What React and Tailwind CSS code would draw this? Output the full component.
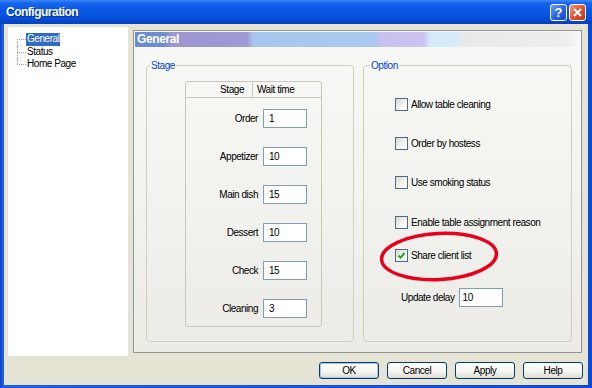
import React from "react";

const stages = [
  ["Order", "1"],
  ["Appetizer", "10"],
  ["Main dish", "15"],
  ["Dessert", "10"],
  ["Check", "15"],
  ["Cleaning", "3"],
];

const options = [
  { label: "Allow table cleaning", mt: "mt-[26px]" },
  { label: "Order by hostess", mt: "mt-[26px]" },
  { label: "Use smoking status", mt: "mt-[26px]" },
  { label: "Enable table assignment reason", mt: "mt-[27px]" },
  { label: "Share client list", mt: "mt-[20px]", checked: true },
];

function CheckBox({ checked }) {
  return (
    <span className="w-[13px] h-[13px] shrink-0 border border-[#4f6b8c] bg-[linear-gradient(135deg,#d8d8d2,#f6f6f3_60%,#ffffff)] flex items-center justify-center">
      {checked && (
        <svg width="9" height="9" viewBox="0 0 9 9">
          <path d="M1.5 4.5 L3.6 6.6 L7.6 2" fill="none" stroke="#21a121" strokeWidth="2" />
        </svg>
      )}
    </span>
  );
}

function XpButton({ children, primary }) {
  return (
    <button
      className={
        primary
          ? "w-[60px] h-[17px] rounded-[3px] border border-[#003c74] bg-[linear-gradient(to_bottom,#ffffff,#f3f3ee_60%,#dcdcd3)] shadow-[inset_0_0_0_1px_#a9c4f0] leading-[15px] text-black"
          : "w-[60px] h-[17px] rounded-[3px] border border-[#003c74] bg-[linear-gradient(to_bottom,#ffffff,#f3f3ee_60%,#dcdcd3)] leading-[15px] text-black"
      }
    >
      {children}
    </button>
  );
}

function TreeItem({ label, first, last, selected }) {
  return (
    <div className="flex h-[12.5px] items-stretch">
      <div className="w-[9px] flex flex-col">
        <div className={first ? "h-1/2" : "h-1/2 border-l border-dotted border-[#a0a0a0]"} />
        <div
          className={
            last
              ? "h-1/2 border-t border-dotted border-[#a0a0a0]"
              : "h-1/2 border-t border-l border-dotted border-[#a0a0a0]"
          }
        />
      </div>
      <span
        className={
          selected
            ? "px-[1px] bg-[#316ac5] text-white leading-[12.5px]"
            : "px-[1px] text-black leading-[12.5px]"
        }
      >
        {label}
      </span>
    </div>
  );
}

export default function App() {
  return (
    <div className="relative w-[592px] h-[388px] flex flex-col overflow-hidden bg-[linear-gradient(to_right,#0a3fc4,#1d5ee6_3px,#0b4ad6)] [font-family:'Liberation_Sans',Arial,sans-serif] text-[10px] tracking-[-0.45px] text-black">
      {/* Title bar */}
      <div className="h-[24px] flex items-center pl-[6px] pr-[6px] bg-[linear-gradient(to_bottom,#3d8af7_0%,#1866ee_12%,#0a58e6_40%,#0552dd_70%,#0447c8_92%,#0a3fb5_100%)]">
        <span className="text-white font-bold text-[12px] tracking-[-0.5px] leading-[16px] [text-shadow:1px_1px_0_#0a2a8a]">
          Configuration
        </span>
        <div className="ml-auto flex gap-[2px]">
          <div className="w-[17px] h-[17px] rounded-[3px] border border-white bg-[linear-gradient(135deg,#6aa0ff,#2b63e8_50%,#1a47c8)] flex items-center justify-center text-white font-bold text-[13px] tracking-normal leading-none">
            ?
          </div>
          <div className="w-[17px] h-[17px] rounded-[3px] border border-white bg-[linear-gradient(135deg,#f29a7a,#e0532f_50%,#c0381a)] flex items-center justify-center">
            <svg width="11" height="11" viewBox="0 0 11 11">
              <path d="M2 2 L9 9 M9 2 L2 9" stroke="white" strokeWidth="2" />
            </svg>
          </div>
        </div>
      </div>

      {/* Body */}
      <div className="flex-1 mx-[4px] mb-[3px] bg-[#e5e3d4] flex flex-col">
        <div className="flex items-start pt-[3px] pl-[4px]">
          {/* Tree */}
          <div className="w-[120px] h-[329px] bg-white pt-[6px] pl-[9px]">
            <TreeItem label="General" first selected />
            <TreeItem label="Status" />
            <TreeItem label="Home Page" last />
          </div>

          {/* Page panel */}
          <div className="ml-[5px] mt-[3px] w-[449px] h-[323px] border border-[#8e979b] p-[1px] bg-[linear-gradient(to_bottom,#f8f8f6,#f1f1ed_60%,#ecebe6)] flex flex-col">
            <div className="h-[15px] pl-[2px] flex items-center bg-[linear-gradient(to_right,#6a8ad2_0px,#6f8dd2_30px,#9b97cf_36px,#9d99d2_112px,#a7c6ef_118px,#aac9f0_240px,#c9c1f2_246px,#ccc3f2_289px,#d4ebfb_295px,#d6ecfb_320px,#e9e9e9_328px,#eeeeee_430px,#f7f7f7_445px)]">
              <span className="text-white font-bold text-[12px] tracking-[-0.4px] leading-[15px]">General</span>
            </div>

            <div className="flex mt-[12px] pl-[11px]">
              {/* Stage */}
              <fieldset className="w-[208px] h-[283px] border border-[#d0d0bf] rounded-[4px]">
                <legend className="ml-[3px] px-[1px] text-[#0046d5] leading-[13px]">Stage</legend>
                <div className="pt-[9px] pl-[38px]">
                  <div className="w-[137px] h-[246px] border border-[#c9c9bb] rounded-[3px] flex flex-col">
                    <div className="h-[16px] flex border-b border-[#c9c9bb]">
                      <div className="w-[67px] border-r border-[#c9c9bb] text-right pr-[8px] leading-[15px]">Stage</div>
                      <div className="flex-1 pl-[4px] leading-[15px]">Wait time</div>
                    </div>
                    <div className="pt-[1px]">
                      {stages.map(([label, value]) => (
                        <div key={label} className="h-[38px] flex items-center">
                          <span className="w-[72px] text-right">{label}</span>
                          <div className="ml-[5px] w-[44px] h-[19px] border border-[#7f9db9] bg-white pl-[5px] leading-[17px]">
                            {value}
                          </div>
                        </div>
                      ))}
                    </div>
                  </div>
                </div>
              </fieldset>

              {/* Option */}
              <fieldset className="ml-[9px] w-[209px] h-[283px] border border-[#d0d0bf] rounded-[4px]">
                <legend className="ml-[6px] px-[1px] text-[#0046d5] leading-[13px]">Option</legend>
                <div className="pl-[31px]">
                  {options.map((o) => (
                    <div key={o.label} className={o.mt + " h-[13px] flex items-center"}>
                      <CheckBox checked={o.checked} />
                      <span className="ml-[3px] leading-[13px]">{o.label}</span>
                    </div>
                  ))}
                  <div className="mt-[26px] ml-[6px] h-[19px] flex items-center">
                    <span>Update delay</span>
                    <div className="ml-[4px] w-[44px] h-[19px] border border-[#7f9db9] bg-white pl-[3px] leading-[17px]">
                      10
                    </div>
                  </div>
                </div>
              </fieldset>
            </div>
          </div>
        </div>

        {/* Buttons */}
        <div className="mt-[6px] pr-[5px] flex justify-end gap-[8px]">
          <XpButton primary>OK</XpButton>
          <XpButton>Cancel</XpButton>
          <XpButton>Apply</XpButton>
          <XpButton>Help</XpButton>
        </div>
      </div>

      {/* Red annotation ellipse */}
      <svg className="absolute left-[378px] top-[231px]" width="122" height="51" viewBox="0 0 122 51">
        <ellipse cx="61" cy="25.5" rx="57.5" ry="23" fill="none" stroke="#e8001c" strokeWidth="3.5" transform="rotate(-3 61 25.5)" />
      </svg>
    </div>
  );
}
